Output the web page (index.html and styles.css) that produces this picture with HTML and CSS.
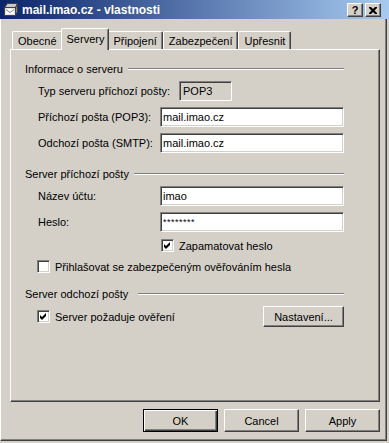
FILE: index.html
```html
<!DOCTYPE html>
<html lang="cs">
<head>
    <meta charset="UTF-8">
    <title>mail.imao.cz - vlastnosti</title>
    <link rel="stylesheet" href="styles.css">
</head>
<body>
    <div class="window">
        <div class="titlebar">
            <svg class="app-icon" width="16" height="16" viewBox="0 0 16 16">
                <path d="M4.5 1.5h10l-2 4h-11z" fill="#c8c8c8" stroke="#404040"/>
                <path d="M12.5 5.5l2-4v8l-2 4z" fill="#808080" stroke="#404040"/>
                <rect x="1.5" y="5.5" width="11" height="8" fill="#e4e4e4" stroke="#404040"/>
                <rect x="3" y="7" width="8" height="5" fill="#fff"/>
                <path d="M3 7.5l4 3 4-3" stroke="#808080" fill="none"/>
            </svg>
            <span class="title">mail.imao.cz - vlastnosti</span>
            <div class="caption-buttons">
                <span class="caption-btn">?</span>
                <span class="caption-btn">
                    <svg width="8" height="7" viewBox="0 0 8 7">
                        <path d="M0 0h2l2 2 2-2h2v1l-2.5 2.5 2.5 2.5v1h-2l-2-2-2 2h-2v-1l2.5-2.5-2.5-2.5z" fill="#000"/>
                    </svg>
                </span>
            </div>
        </div>

        <div class="frame">
            <div class="tabs">
                <div class="tab">Obecné</div>
                <div class="tab tab-active">Servery</div>
                <div class="tab">Připojení</div>
                <div class="tab">Zabezpečení</div>
                <div class="tab">Upřesnit</div>
            </div>

            <div class="panel">
                <div class="group">
                    <div class="group-title"><span>Informace o serveru</span><span class="etch"></span></div>
                    <div class="row">
                        <label class="label label-wide">Typ serveru příchozí pošty:</label>
                        <div class="field field-static">POP3</div>
                    </div>
                    <div class="row">
                        <label class="label" for="incoming">Příchozí pošta (POP3):</label>
                        <input class="field" id="incoming" type="text" value="mail.imao.cz" readonly>
                    </div>
                    <div class="row">
                        <label class="label" for="outgoing">Odchozí pošta (SMTP):</label>
                        <input class="field" id="outgoing" type="text" value="mail.imao.cz" readonly>
                    </div>
                </div>

                <div class="group">
                    <div class="group-title"><span>Server příchozí pošty</span><span class="etch"></span></div>
                    <div class="row">
                        <label class="label" for="account">Název účtu:</label>
                        <input class="field" id="account" type="text" value="imao" readonly>
                    </div>
                    <div class="row">
                        <label class="label" for="password">Heslo:</label>
                        <input class="field field-secret" id="password" type="text" value="********" readonly>
                    </div>
                    <div class="check-row check-row-indented">
                        <span class="checkbox checked"><svg width="7" height="7" viewBox="0 0 7 7"><path d="M0 2l2 2 4-4v3l-4 4-2-2z" fill="#000"/></svg></span>
                        <span>Zapamatovat heslo</span>
                    </div>
                    <div class="check-row check-row-spaced">
                        <span class="checkbox"></span>
                        <span>Přihlašovat se zabezpečeným ověřováním hesla</span>
                    </div>
                </div>

                <div class="group">
                    <div class="group-title group-title-wide"><span>Server odchozí pošty</span><span class="etch"></span></div>
                    <div class="row row-split">
                        <div class="check-inline">
                            <span class="checkbox checked"><svg width="7" height="7" viewBox="0 0 7 7"><path d="M0 2l2 2 4-4v3l-4 4-2-2z" fill="#000"/></svg></span>
                            <span>Server požaduje ověření</span>
                        </div>
                        <button class="btn btn-settings">Nastavení...</button>
                    </div>
                </div>
            </div>

            <div class="actions">
                <button class="btn btn-default">OK</button>
                <button class="btn">Cancel</button>
                <button class="btn">Apply</button>
            </div>
        </div>
    </div>
</body>
</html>
```

FILE: styles.css
```css
body {
    margin: 0;
    background-color: #d4d0c8;
    font-family: 'Liberation Sans', Arial, sans-serif;
    font-size: 11px;
    color: #000;
}
.window {
    width: 389px;
    height: 443px;
    display: flex;
    flex-direction: column;
}
.titlebar {
    height: 19px;
    flex: none;
    box-sizing: border-box;
    display: flex;
    align-items: center;
    padding: 1px 8px 0 3px;
    background: linear-gradient(to right, #0a246a, #a6caf0);
    color: #fff;
}
.app-icon {
    flex: none;
}
.title {
    margin-left: 3px;
    font-weight: bold;
    font-size: 12px;
}
.caption-buttons {
    margin-left: auto;
    display: flex;
    gap: 2px;
}
.caption-btn {
    width: 16px;
    height: 14px;
    box-sizing: border-box;
    display: flex;
    align-items: center;
    justify-content: center;
    background-color: #d4d0c8;
    border-top: 1px solid #fff;
    border-left: 1px solid #fff;
    border-right: 1px solid #404040;
    border-bottom: 1px solid #404040;
    box-shadow: inset -1px -1px #808080;
    color: #000;
    font-weight: bold;
    font-size: 11px;
    line-height: 1;
}
.frame {
    flex: 1;
    margin: 0 2px 2px 0;
    padding: 9px 0 0 9px;
    border-left: 1px solid #fff;
    border-right: 1px solid #404040;
    border-bottom: 1px solid #404040;
    box-shadow: inset -1px -1px #808080;
}
.tabs {
    display: flex;
    align-items: flex-end;
    height: 21px;
    padding-left: 2px;
}
.tab {
    height: 18px;
    box-sizing: border-box;
    display: flex;
    align-items: center;
    padding: 0 5px;
    border-top: 1px solid #fff;
    border-left: 1px solid #fff;
    border-right: 1px solid #404040;
    box-shadow: inset -1px 0 #808080;
    border-radius: 2px 2px 0 0;
}
.tab-active {
    height: 22px;
    margin: 0 -2px -1px;
    padding: 0 4px 2px 5px;
    position: relative;
    z-index: 1;
    background-color: #d4d0c8;
}
.panel {
    width: 370px;
    height: 353px;
    box-sizing: border-box;
    padding: 12px 35px 0 14px;
    border-top: 1px solid #fff;
    border-left: 1px solid #fff;
    border-right: 1px solid #404040;
    border-bottom: 1px solid #404040;
    box-shadow: inset -1px -1px #808080;
}
.group + .group {
    margin-top: 14px;
}
.group-title {
    display: flex;
    align-items: center;
    gap: 5px;
    height: 13px;
}
.group-title-wide {
    gap: 10px;
}
.etch {
    flex: 1;
    border-top: 1px solid #808080;
    border-bottom: 1px solid #fff;
}
.row {
    display: flex;
    align-items: center;
    height: 20px;
    margin-top: 6px;
    padding-left: 13px;
}
.label {
    width: 122px;
    flex: none;
}
.label-wide {
    width: 141px;
}
.field {
    width: 184px;
    height: 20px;
    box-sizing: border-box;
    margin: 0;
    padding: 0 2px;
    border: 1px solid;
    border-color: #808080 #fff #fff #808080;
    box-shadow: inset 1px 1px #404040, inset -1px -1px #d4d0c8;
    background-color: #fff;
    font-family: inherit;
    font-size: 11px;
    color: #000;
    outline: none;
    border-radius: 0;
}
.field-static {
    width: 53px;
    display: flex;
    align-items: center;
    padding-left: 3px;
    background-color: #d4d0c8;
}
.field-secret {
    font-size: 9px;
    letter-spacing: 0.5px;
}
.check-row {
    display: flex;
    align-items: center;
    gap: 5px;
    height: 13px;
    margin-top: 7px;
    padding-left: 12px;
}
.check-row-indented {
    padding-left: 136px;
}
.check-row-spaced {
    margin-top: 8px;
}
.check-inline {
    display: flex;
    align-items: center;
    gap: 5px;
    margin-left: -1px;
}
.checkbox {
    width: 13px;
    height: 13px;
    flex: none;
    box-sizing: border-box;
    display: flex;
    align-items: center;
    justify-content: center;
    border: 1px solid;
    border-color: #808080 #fff #fff #808080;
    box-shadow: inset 1px 1px #404040, inset -1px -1px #d4d0c8;
    background-color: #fff;
}
.row-split {
    justify-content: space-between;
    height: 21px;
}
.btn {
    width: 75px;
    height: 23px;
    box-sizing: border-box;
    padding: 0;
    border-top: 1px solid #fff;
    border-left: 1px solid #fff;
    border-right: 1px solid #404040;
    border-bottom: 1px solid #404040;
    box-shadow: inset -1px -1px #808080;
    background-color: #d4d0c8;
    font-family: inherit;
    font-size: 11px;
    color: #000;
    border-radius: 0;
}
.btn-settings {
    width: 81px;
    height: 21px;
}
.btn-default {
    border: 1px solid #000;
    box-shadow: inset 1px 1px #fff, inset -1px -1px #404040, inset -2px -2px #808080;
}
.actions {
    width: 370px;
    display: flex;
    justify-content: flex-end;
    gap: 6px;
    margin-top: 7px;
}
```
